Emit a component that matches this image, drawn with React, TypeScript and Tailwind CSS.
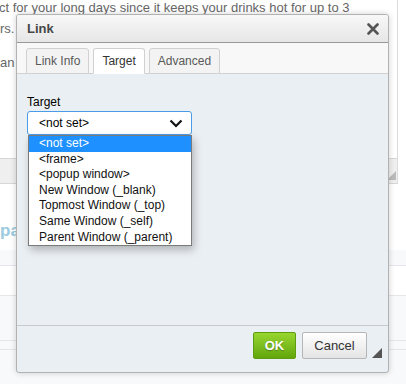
import React, { useState } from 'react';

const options = [
  '<not set>',
  '<frame>',
  '<popup window>',
  'New Window (_blank)',
  'Topmost Window (_top)',
  'Same Window (_self)',
  'Parent Window (_parent)',
];

const tabs = ['Link Info', 'Target', 'Advanced'];

/**
 * ダイアログ背面のページ
 */
const BackgroundPage: React.FC = () => (
  <div className="absolute inset-0 flex flex-col">
    <div className="flex w-[398px] flex-col border-r border-[#dcdcdc]">
      <p className="ml-[-1px] mt-[-3px] whitespace-nowrap text-[13px] leading-[21px] text-[#666]">
        ct for your long days since it keeps your drinks hot for up to 3
      </p>
      <p className="whitespace-nowrap text-[13px] leading-[21px] text-[#666]">rs.</p>
      <p className="mt-[13px] whitespace-nowrap text-[13px] leading-[21px] text-[#666]">an t</p>
      <div className="h-[85px]"></div>
      <div className="relative h-[26px] border-y border-[#d6d6d6] bg-[#efefef]">
        <div className="absolute bottom-[3px] right-[1px] h-0 w-0 border-b-[9px] border-l-[9px] border-b-[#bbb] border-l-transparent"></div>
      </div>
    </div>
    <div className="mt-[36px] text-[17px] font-bold leading-[22px] text-[#9ccbe0]">pa</div>
    <div className="mt-[8px] flex flex-1 flex-col bg-[#f8f9fb]">
      <div className="h-[15px]"></div>
      <div className="h-[30px] border-t border-[#e4e6e9] bg-white"></div>
      <div className="h-[45px] border-t border-[#e4e6e9]"></div>
      <div className="h-[9px] border-t border-[#e4e6e9]"></div>
      <div className="border-t border-[#e4e6e9]"></div>
    </div>
  </div>
);

const App: React.FC = () => {
  const [active] = useState(1);

  return (
    <div
      className="relative h-[384px] w-[406px] overflow-hidden bg-white"
      style={{ fontFamily: '"Liberation Sans", Arial, sans-serif' }}
    >
      <BackgroundPage />

      {/* Link ダイアログ */}
      <div className="absolute left-[16px] top-[14px] flex h-[359px] w-[373px] flex-col overflow-hidden rounded-[3px] border border-[#b2b2b2] bg-[#eaeff3] shadow-[0_0_6px_rgba(0,0,0,0.18)]">
        {/* タイトルバー */}
        <div className="flex h-[28px] shrink-0 items-center justify-between border-b border-[#999] bg-gradient-to-b from-[#f8f8f8] to-[#e6e6e6] pl-[10px] pr-[9px]">
          <span className="text-[13px] font-bold text-[#474747]">Link</span>
          <svg width="12" height="12" viewBox="0 0 12 12" className="mt-[1px]">
            <path d="M1.5 1.5 L10.5 10.5 M10.5 1.5 L1.5 10.5" stroke="#555" strokeWidth="2.6" strokeLinecap="round" />
          </svg>
        </div>

        {/* タブ */}
        <div className="flex h-[31px] shrink-0 items-end gap-[4px] border-b border-[#d1d1d1] bg-[#f8f8f8] pl-[9px]">
          {tabs.map((tab, i) => (
            <div
              key={tab}
              className={`mb-[-1px] flex h-[26px] items-center rounded-t-[3px] border border-[#d1d1d1] px-[8px] text-[12px] ${
                i === active ? 'border-b-white bg-white text-[#333]' : 'bg-[#f3f3f3] text-[#595959]'
              }`}
            >
              {tab}
            </div>
          ))}
        </div>

        {/* 本文 */}
        <div className="relative flex-1 px-[10px] pt-[21px]">
          <div className="text-[12px] leading-[15px] text-black">Target</div>
          <div className="relative mt-[1px] w-[165px]">
            <div className="flex h-[24px] items-center justify-between rounded-[3px] border border-[#4b9ce8] bg-white pl-[11px] pr-[8px] text-[12px] text-black">
              <span>&lt;not set&gt;</span>
              <svg width="14" height="9" viewBox="0 0 14 9">
                <path d="M1.5 1.5 L7 7 L12.5 1.5" fill="none" stroke="#111" strokeWidth="2.2" />
              </svg>
            </div>
            {/* ドロップダウン */}
            <div className="absolute left-[1px] top-[24px] z-10 w-[164px] border border-[#7a7a7a] bg-white shadow-[2px_4px_8px_rgba(0,0,0,0.25)]">
              {options.map((opt, i) => (
                <div
                  key={opt}
                  className={`h-[15.6px] whitespace-nowrap pl-[10px] text-[12px] leading-[15.6px] ${
                    i === 0 ? 'bg-[#1e90ff] text-white' : 'text-[#111]'
                  }`}
                >
                  {opt}
                </div>
              ))}
            </div>
          </div>
        </div>

        {/* フッター */}
        <div className="relative flex h-[47px] shrink-0 items-start justify-end gap-[6px] border-t border-[#c9c9c9] pr-[21px] pt-[6px]">
          <button className="flex h-[27px] w-[43px] items-center justify-center rounded-[2px] border border-[#5c9d12] bg-gradient-to-b from-[#98d62f] to-[#62a60b] text-[13px] font-bold text-white [text-shadow:0_1px_1px_rgba(0,0,0,0.3)]">
            OK
          </button>
          <button className="flex h-[27px] w-[65px] items-center justify-center rounded-[2px] border border-[#b6b6b6] bg-gradient-to-b from-white to-[#e4e4e4] text-[13px] text-[#333]">
            Cancel
          </button>
          <div className="absolute bottom-[14px] right-[6px] h-0 w-0 border-b-[10px] border-l-[10px] border-b-[#555] border-l-transparent"></div>
        </div>
      </div>
    </div>
  );
};

export default App;
